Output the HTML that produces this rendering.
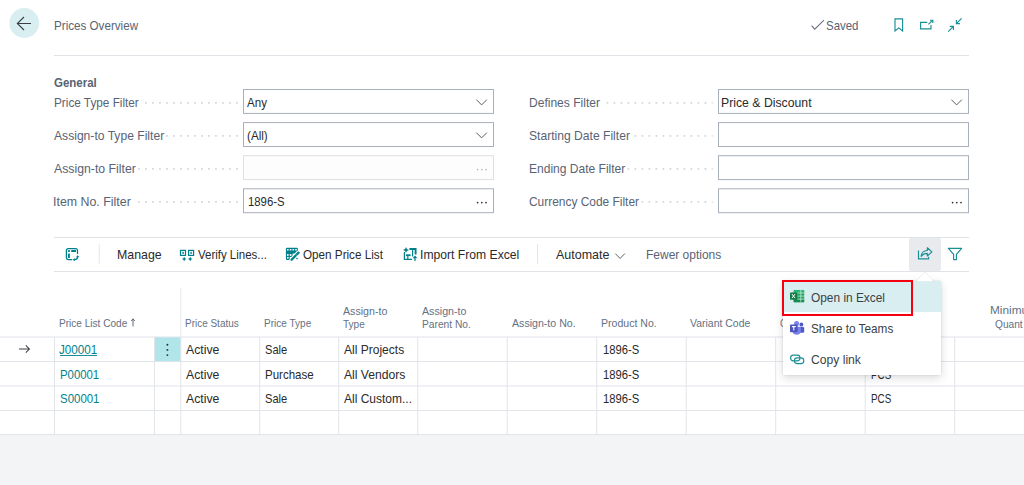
<!DOCTYPE html>
<html><head><meta charset="utf-8"><title>Prices Overview</title>
<style>
html,body{margin:0;padding:0}
body{width:1024px;height:485px;overflow:hidden;position:relative;background:#fff;font-family:"Liberation Sans",sans-serif}
.t{position:absolute;white-space:nowrap;line-height:16px;transform-origin:0 50%;display:block}
.a{position:absolute}
.hl{position:absolute;height:1px;background:#dfe2e7}
.vl{position:absolute;width:1px;background:#e1e3e6}
.box{position:absolute;box-sizing:border-box;border:1px solid #a9b0ba;background:#fff;height:25px}
.box.dis{border-color:#dcdfe3;background:#fdfdfd}
.dots{position:absolute;height:2px;background-image:radial-gradient(circle at 6px 1px,#c6cad0 0.7px,transparent 1.15px);background-size:7px 2px;background-repeat:repeat-x;background-position:right top}
svg{position:absolute;overflow:visible}
</style></head><body>
<!-- bottom gray -->
<div class="a" style="left:0;top:435px;width:1024px;height:50px;background:#f3f4f6"></div>

<!-- back button -->
<svg style="left:0;top:0" width="64" height="48" viewBox="0 0 64 48" fill="none"><circle cx="24.25" cy="23" r="14.9" fill="#d8eef1"/><path d="M24 17 L17.3 23.5 L24 30 M17.3 23.5 H31" stroke="#3b3f45" stroke-width="1.1"/></svg>

<!-- title line -->
<div class="hl" style="left:54px;top:55px;width:915px"></div>

<!-- form boxes -->
<svg style="left:0;top:0" width="1024" height="485" viewBox="0 0 1024 485" fill="#fff" stroke="#a9b0ba" stroke-width="1">
<rect x="243.5" y="89.50" width="250" height="23.9"/>
<rect x="243.5" y="122.60" width="250" height="23.9"/>
<rect x="243.5" y="155.70" width="250" height="23.9" stroke="#dcdfe4" fill="#fdfdfd"/>
<rect x="243.5" y="188.80" width="250" height="23.9"/>
<rect x="718.5" y="89.50" width="250" height="23.9"/>
<rect x="718.5" y="122.60" width="250" height="23.9"/>
<rect x="718.5" y="155.70" width="250" height="23.9"/>
<rect x="718.5" y="188.80" width="250" height="23.9"/>
</svg>
<svg style="left:0;top:0" width="1024" height="485" viewBox="0 0 1024 485" fill="#d2d5da"><rect x="236.09" y="102.05" width="1.7" height="1.7"/><rect x="229.09" y="102.05" width="1.7" height="1.7"/><rect x="222.09" y="102.05" width="1.7" height="1.7"/><rect x="215.09" y="102.05" width="1.7" height="1.7"/><rect x="208.09" y="102.05" width="1.7" height="1.7"/><rect x="201.09" y="102.05" width="1.7" height="1.7"/><rect x="194.09" y="102.05" width="1.7" height="1.7"/><rect x="187.09" y="102.05" width="1.7" height="1.7"/><rect x="180.09" y="102.05" width="1.7" height="1.7"/><rect x="173.09" y="102.05" width="1.7" height="1.7"/><rect x="166.09" y="102.05" width="1.7" height="1.7"/><rect x="159.09" y="102.05" width="1.7" height="1.7"/><rect x="152.09" y="102.05" width="1.7" height="1.7"/><rect x="145.09" y="102.05" width="1.7" height="1.7"/><rect x="236.09" y="135.05" width="1.7" height="1.7"/><rect x="229.09" y="135.05" width="1.7" height="1.7"/><rect x="222.09" y="135.05" width="1.7" height="1.7"/><rect x="215.09" y="135.05" width="1.7" height="1.7"/><rect x="208.09" y="135.05" width="1.7" height="1.7"/><rect x="201.09" y="135.05" width="1.7" height="1.7"/><rect x="194.09" y="135.05" width="1.7" height="1.7"/><rect x="187.09" y="135.05" width="1.7" height="1.7"/><rect x="180.09" y="135.05" width="1.7" height="1.7"/><rect x="173.09" y="135.05" width="1.7" height="1.7"/><rect x="166.09" y="135.05" width="1.7" height="1.7"/><rect x="236.09" y="168.05" width="1.7" height="1.7"/><rect x="229.09" y="168.05" width="1.7" height="1.7"/><rect x="222.09" y="168.05" width="1.7" height="1.7"/><rect x="215.09" y="168.05" width="1.7" height="1.7"/><rect x="208.09" y="168.05" width="1.7" height="1.7"/><rect x="201.09" y="168.05" width="1.7" height="1.7"/><rect x="194.09" y="168.05" width="1.7" height="1.7"/><rect x="187.09" y="168.05" width="1.7" height="1.7"/><rect x="180.09" y="168.05" width="1.7" height="1.7"/><rect x="173.09" y="168.05" width="1.7" height="1.7"/><rect x="166.09" y="168.05" width="1.7" height="1.7"/><rect x="159.09" y="168.05" width="1.7" height="1.7"/><rect x="152.09" y="168.05" width="1.7" height="1.7"/><rect x="145.09" y="168.05" width="1.7" height="1.7"/><rect x="138.09" y="168.05" width="1.7" height="1.7"/><rect x="236.09" y="201.05" width="1.7" height="1.7"/><rect x="229.09" y="201.05" width="1.7" height="1.7"/><rect x="222.09" y="201.05" width="1.7" height="1.7"/><rect x="215.09" y="201.05" width="1.7" height="1.7"/><rect x="208.09" y="201.05" width="1.7" height="1.7"/><rect x="201.09" y="201.05" width="1.7" height="1.7"/><rect x="194.09" y="201.05" width="1.7" height="1.7"/><rect x="187.09" y="201.05" width="1.7" height="1.7"/><rect x="180.09" y="201.05" width="1.7" height="1.7"/><rect x="173.09" y="201.05" width="1.7" height="1.7"/><rect x="166.09" y="201.05" width="1.7" height="1.7"/><rect x="159.09" y="201.05" width="1.7" height="1.7"/><rect x="152.09" y="201.05" width="1.7" height="1.7"/><rect x="145.09" y="201.05" width="1.7" height="1.7"/><rect x="138.09" y="201.05" width="1.7" height="1.7"/><rect x="704.55" y="102.05" width="1.7" height="1.7"/><rect x="697.55" y="102.05" width="1.7" height="1.7"/><rect x="690.55" y="102.05" width="1.7" height="1.7"/><rect x="683.55" y="102.05" width="1.7" height="1.7"/><rect x="676.55" y="102.05" width="1.7" height="1.7"/><rect x="669.55" y="102.05" width="1.7" height="1.7"/><rect x="662.55" y="102.05" width="1.7" height="1.7"/><rect x="655.55" y="102.05" width="1.7" height="1.7"/><rect x="648.55" y="102.05" width="1.7" height="1.7"/><rect x="641.55" y="102.05" width="1.7" height="1.7"/><rect x="634.55" y="102.05" width="1.7" height="1.7"/><rect x="627.55" y="102.05" width="1.7" height="1.7"/><rect x="620.55" y="102.05" width="1.7" height="1.7"/><rect x="613.55" y="102.05" width="1.7" height="1.7"/><rect x="606.55" y="102.05" width="1.7" height="1.7"/><rect x="704.55" y="135.05" width="1.7" height="1.7"/><rect x="697.55" y="135.05" width="1.7" height="1.7"/><rect x="690.55" y="135.05" width="1.7" height="1.7"/><rect x="683.55" y="135.05" width="1.7" height="1.7"/><rect x="676.55" y="135.05" width="1.7" height="1.7"/><rect x="669.55" y="135.05" width="1.7" height="1.7"/><rect x="662.55" y="135.05" width="1.7" height="1.7"/><rect x="655.55" y="135.05" width="1.7" height="1.7"/><rect x="648.55" y="135.05" width="1.7" height="1.7"/><rect x="641.55" y="135.05" width="1.7" height="1.7"/><rect x="634.55" y="135.05" width="1.7" height="1.7"/><rect x="704.55" y="168.05" width="1.7" height="1.7"/><rect x="697.55" y="168.05" width="1.7" height="1.7"/><rect x="690.55" y="168.05" width="1.7" height="1.7"/><rect x="683.55" y="168.05" width="1.7" height="1.7"/><rect x="676.55" y="168.05" width="1.7" height="1.7"/><rect x="669.55" y="168.05" width="1.7" height="1.7"/><rect x="662.55" y="168.05" width="1.7" height="1.7"/><rect x="655.55" y="168.05" width="1.7" height="1.7"/><rect x="648.55" y="168.05" width="1.7" height="1.7"/><rect x="641.55" y="168.05" width="1.7" height="1.7"/><rect x="634.55" y="168.05" width="1.7" height="1.7"/><rect x="627.55" y="168.05" width="1.7" height="1.7"/><rect x="704.55" y="201.05" width="1.7" height="1.7"/><rect x="697.55" y="201.05" width="1.7" height="1.7"/><rect x="690.55" y="201.05" width="1.7" height="1.7"/><rect x="683.55" y="201.05" width="1.7" height="1.7"/><rect x="676.55" y="201.05" width="1.7" height="1.7"/><rect x="669.55" y="201.05" width="1.7" height="1.7"/><rect x="662.55" y="201.05" width="1.7" height="1.7"/><rect x="655.55" y="201.05" width="1.7" height="1.7"/><rect x="648.55" y="201.05" width="1.7" height="1.7"/><rect x="641.55" y="201.05" width="1.7" height="1.7"/><g fill="#e6e8eb"><rect x="711.55" y="102.05" width="1.7" height="1.7"/><rect x="711.55" y="135.05" width="1.7" height="1.7"/><rect x="711.55" y="168.05" width="1.7" height="1.7"/><rect x="711.55" y="201.05" width="1.7" height="1.7"/></g></svg>

<!-- toolbar -->
<div class="hl" style="left:54px;top:237px;width:915px"></div>
<div class="hl" style="left:54px;top:271px;width:915px"></div>
<svg style="left:0;top:0" width="1024" height="485" viewBox="0 0 1024 485" fill="#e1e4e9"><rect x="98.7" y="244.3" width="1" height="19.4"/><rect x="537.1" y="244.3" width="1" height="19.4"/></svg>
<div class="a" style="left:909.3px;top:238px;width:31.7px;height:33px;background:#e9eaed;border-radius:2px"></div>

<!-- table grid -->
<div class="a" style="left:155px;top:337px;width:26px;height:24px;background:#b0e6ea"></div>
<svg style="left:0;top:0" width="1024" height="485" viewBox="0 0 1024 485" fill="#e1e4e9">
<rect x="0" y="336.5" width="1024" height="1"/><rect x="0" y="361" width="1024" height="1"/><rect x="0" y="385.5" width="1024" height="1"/><rect x="0" y="410" width="1024" height="1"/><rect x="0" y="434" width="1024" height="1"/>
<rect x="54" y="337" width="1" height="97"/><rect x="154" y="337" width="1" height="97"/><rect x="259.2" y="337" width="1" height="97"/><rect x="338.2" y="337" width="1" height="97"/><rect x="417.2" y="337" width="1" height="97"/><rect x="506.7" y="337" width="1" height="97"/><rect x="596.2" y="337" width="1" height="97"/><rect x="685.7" y="337" width="1" height="97"/><rect x="775.2" y="337" width="1" height="97"/><rect x="864.7" y="337" width="1" height="97"/><rect x="954.2" y="337" width="1" height="97"/><rect x="180.3" y="337" width="1" height="97"/><rect x="180.3" y="288" width="1" height="49" fill="#e6e8eb"/>
</svg>

<!-- ICONS -->
<svg style="left:0;top:0" width="1024" height="485" viewBox="0 0 1024 485" fill="none">
<g stroke="#6a7280" stroke-width="1.05">
 <path d="M811.6 25.6 L814.7 29.2 L824 20.1"/>
</g>
<g stroke="#1a8f96" stroke-width="1.15">
 <!-- bookmark -->
 <path d="M895 18.8 H902.6 V31 L898.8 27.9 L895 31 Z"/>
 <!-- popout -->
 <path d="M927.3 22.3 H920.6 V28.9 H931 V25"/>
 <path d="M928.4 24.3 L932.4 20.5"/>
 <path d="M930 20.2 H932.8 V23" />
 <!-- collapse -->
 <path d="M961.6 18.4 L956.4 23.6 M956.4 20 V23.6 H960"/>
 <path d="M948.2 31.6 L953.4 26.4 M949.8 26.4 H953.4 V30"/>
</g>
<!-- dropdown chevrons -->
<g stroke="#555b64" stroke-width="1">
 <path d="M476.4 99.7 L481.6 104.9 L486.8 99.7"/>
 <path d="M476.4 132.7 L481.6 137.9 L486.8 132.7"/>
 <path d="M951.4 99.7 L956.6 104.9 L961.8 99.7"/>
 <path d="M615.3 253.6 L620.1 258.4 L624.9 253.6" stroke="#5a6270"/>
</g>
<!-- ellipsis -->
<g fill="#2a2d33">
 <circle cx="477.6" cy="202.6" r=".85"/><circle cx="481.8" cy="202.6" r=".85"/><circle cx="486" cy="202.6" r=".85"/>
 <circle cx="952.6" cy="202.6" r=".85"/><circle cx="956.8" cy="202.6" r=".85"/><circle cx="961" cy="202.6" r=".85"/>
</g>
<g fill="#b7bcc3">
 <circle cx="477.6" cy="169.6" r=".85"/><circle cx="481.8" cy="169.6" r=".85"/><circle cx="486" cy="169.6" r=".85"/>
</g>
<!-- row arrow -->
<path d="M19 349 H29.4 M25.8 345.4 L29.4 349 L25.8 352.6" stroke="#3b3f45" stroke-width="1.05"/>
<!-- vertical 3 dots -->
<g fill="#2a2d33"><circle cx="167.4" cy="344.7" r=".95"/><circle cx="167.4" cy="349.9" r=".95"/><circle cx="167.4" cy="355.1" r=".95"/></g>
<!-- sort arrow -->
<path d="M133 326.4 V318.8 M131.2 321 L133 318.8 L134.8 321" stroke="#5c6b7e" stroke-width="1"/>

<!-- toolbar icon 1 -->
<g stroke="#00808a" stroke-width="1.25" stroke-linecap="round">
 <path d="M77.5 253.6 V250.4 Q77.5 248.5 75.6 248.5 H68.3 Q66.4 248.5 66.4 250.4 V257.6 Q66.4 259.5 68.3 259.5 H71.8"/>
 <path d="M77.6 257 Q77.6 259.6 74.4 259.6"/>
</g>
<g fill="#00808a">
 <rect x="68" y="250.1" width="1.9" height="1.9" rx=".4"/>
 <rect x="71.2" y="250.1" width="4.9" height="1.9" rx=".6"/>
 <rect x="68" y="253.6" width="1.9" height="4.5" rx=".6"/>
 <path d="M76 257.2 L77.7 255.2 L79.4 257.2 Z"/>
 <path d="M74.8 258 L72.8 259.7 L74.8 261.2 Z"/>
</g>
<!-- verify lines icon -->
<g stroke="#00808a" stroke-width="1.2">
 <rect x="180.5" y="250.4" width="5" height="5"/>
 <rect x="188.6" y="250.4" width="5" height="5"/>
</g>
<g fill="#3a9fa6">
 <rect x="182.2" y="251.8" width="1.8" height="2.2"/>
 <rect x="190.3" y="251.8" width="1.8" height="2.2"/>
</g>
<g fill="#00808a">
 <path d="M184.2 256.8 L185 258.2 L186.4 259 L185 259.8 L184.2 261.2 L183.4 259.8 L182 259 L183.4 258.2 Z"/>
 <path d="M190.2 256.8 L191 258.2 L192.4 259 L191 259.8 L190.2 261.2 L189.4 259.8 L188 259 L189.4 258.2 Z"/>
</g>
<!-- open price list icon -->
<rect x="285.9" y="247.8" width="12" height="12.1" rx="1.2" fill="#00808a"/>
<g fill="#fff">
 <rect x="287" y="249" width="1.6" height="1.5"/><rect x="289.8" y="249" width="1.6" height="1.5"/><rect x="292.5" y="249" width="1.6" height="1.5"/><rect x="295.2" y="249" width="1.6" height="1.5"/>
 <rect x="287" y="254.1" width="1.6" height="1.8"/><rect x="289.8" y="254.1" width="1.6" height="1.8"/>
 <rect x="287" y="257" width="1.6" height="1.6"/><rect x="289.8" y="257" width="1.6" height="1.6"/>
 <path d="M292.6 253.6 H298 V260 H292.6 Z"/>
</g>
<path d="M299 252 L290.6 260.6" stroke="#fff" stroke-width="4.2"/>
<path d="M298.6 252.6 L291.6 259.8" stroke="#00808a" stroke-width="2.3" stroke-linecap="round"/>
<path d="M296.3 254.6 L297.2 255.5" stroke="#fff" stroke-width=".7"/>
<circle cx="297" cy="258.6" r=".8" fill="#00808a"/>
<!-- import from excel icon -->
<g stroke="#00808a" stroke-width="1.2">
 <path d="M404.4 252 V259.4 H412"/>
 <path d="M406 255.2 H410.6" stroke-width="1.8"/>
 <path d="M407.8 255.2 V259.4"/>
 <path d="M412.6 250 V256.6"/>
 <path d="M409.4 249 H415.6 V254.5" stroke-width="1.9"/>
 <path d="M415 261 V257"/>
</g>
<g fill="#00808a">
 <path d="M406 247 L406.9 249.1 L409 250 L406.9 250.9 L406 253 L405.1 250.9 L403 250 L405.1 249.1 Z"/>
 <path d="M412.6 258.2 L415 255.4 L417.4 258.2 Z"/>
</g>
<!-- share icon -->
<g stroke="#1a8f96" stroke-width="1.15">
 <path d="M918.5 250.4 V258.8 H928.6 V256.8"/>
 <path d="M921.2 256.4 Q921.6 250.8 927.3 250.5 V247.8 L931.9 251.9 L927.3 256 V253.4 Q923.4 253.4 921.2 256.4 Z" stroke-linejoin="round"/>
</g>
<!-- filter icon -->
<path d="M948.4 248.3 H961.6 L956.4 254.4 V259.6 H953.6 V254.4 Z" stroke="#1a8f96" stroke-width="1.15" stroke-linejoin="round"/>
</svg>

<div class="a" style="left:59.8px;top:355px;width:37.2px;height:1px;background:#1a8f96"></div>
<span class="t" style="left:53.54px;top:18.08px;font-size:12.6px;color:#586374;transform:scaleX(0.9242)">Prices Overview</span>
<span class="t" style="left:825.79px;top:18.08px;font-size:12.6px;color:#586374;transform:scaleX(0.9098)">Saved</span>
<span class="t" style="left:53.73px;top:74.68px;font-size:12.6px;color:#586374;font-weight:700;transform:scaleX(0.9115)">General</span>
<span class="t" style="left:53.75px;top:94.98px;font-size:12.6px;color:#586374;transform:scaleX(0.9343)">Price Type Filter</span>
<span class="t" style="left:54.01px;top:127.98px;font-size:12.6px;color:#586374;transform:scaleX(0.9619)">Assign-to Type Filter</span>
<span class="t" style="left:53.87px;top:160.98px;font-size:12.6px;color:#586374;transform:scaleX(0.9748)">Assign-to Filter</span>
<span class="t" style="left:53.01px;top:193.98px;font-size:12.6px;color:#586374;transform:scaleX(0.9837)">Item No. Filter</span>
<span class="t" style="left:529.27px;top:94.98px;font-size:12.6px;color:#586374;transform:scaleX(0.9566)">Defines Filter</span>
<span class="t" style="left:528.89px;top:127.98px;font-size:12.6px;color:#586374;transform:scaleX(0.9615)">Starting Date Filter</span>
<span class="t" style="left:529.37px;top:160.98px;font-size:12.6px;color:#586374;transform:scaleX(0.9553)">Ending Date Filter</span>
<span class="t" style="left:528.52px;top:193.98px;font-size:12.6px;color:#586374;transform:scaleX(0.9470)">Currency Code Filter</span>
<span class="t" style="left:246.57px;top:95.28px;font-size:12.6px;color:#2a2a2a;transform:scaleX(0.9175)">Any</span>
<span class="t" style="left:246.98px;top:128.28px;font-size:12.6px;color:#2a2a2a;transform:scaleX(0.9265)">(All)</span>
<span class="t" style="left:247.78px;top:194.28px;font-size:12.6px;color:#2a2a2a;transform:scaleX(0.9006)">1896-S</span>
<span class="t" style="left:721.33px;top:95.28px;font-size:12.6px;color:#2a2a2a;transform:scaleX(0.9728)">Price &amp; Discount</span>
<span class="t" style="left:117.42px;top:247.18px;font-size:12.6px;color:#2a2a2a;transform:scaleX(0.9803)">Manage</span>
<span class="t" style="left:198.13px;top:247.18px;font-size:12.6px;color:#2a2a2a;transform:scaleX(0.9106)">Verify Lines...</span>
<span class="t" style="left:303.25px;top:247.18px;font-size:12.6px;color:#2a2a2a;transform:scaleX(0.9280)">Open Price List</span>
<span class="t" style="left:419.73px;top:247.18px;font-size:12.6px;color:#2a2a2a;transform:scaleX(0.9652)">Import From Excel</span>
<span class="t" style="left:555.53px;top:247.18px;font-size:12.6px;color:#2a2a2a;transform:scaleX(0.9921)">Automate</span>
<span class="t" style="left:645.78px;top:247.18px;font-size:12.6px;color:#586374;transform:scaleX(0.9512)">Fewer options</span>
<span class="t" style="left:58.76px;top:314.98px;font-size:10.6px;color:#647184;transform:scaleX(0.9503)">Price List Code</span>
<span class="t" style="left:185.02px;top:314.98px;font-size:10.6px;color:#647184;transform:scaleX(0.9404)">Price Status</span>
<span class="t" style="left:264.17px;top:314.98px;font-size:10.6px;color:#647184;transform:scaleX(0.9473)">Price Type</span>
<span class="t" style="left:343.22px;top:302.68px;font-size:10.6px;color:#647184;transform:scaleX(1.0029)">Assign-to</span>
<span class="t" style="left:343.39px;top:316.28px;font-size:10.6px;color:#647184;transform:scaleX(0.9470)">Type</span>
<span class="t" style="left:422.41px;top:302.68px;font-size:10.6px;color:#647184;transform:scaleX(1.0056)">Assign-to</span>
<span class="t" style="left:422.09px;top:316.28px;font-size:10.6px;color:#647184;transform:scaleX(0.9654)">Parent No.</span>
<span class="t" style="left:511.78px;top:314.98px;font-size:10.6px;color:#647184;transform:scaleX(1.0011)">Assign-to No.</span>
<span class="t" style="left:601.28px;top:314.98px;font-size:10.6px;color:#647184;transform:scaleX(0.9966)">Product No.</span>
<span class="t" style="left:690.25px;top:314.98px;font-size:10.6px;color:#647184;transform:scaleX(0.9879)">Variant Code</span>
<span class="t" style="left:780.26px;top:314.98px;font-size:10.6px;color:#647184;transform:scaleX(0.8439)">C</span>
<span class="t" style="left:989.68px;top:302.38px;font-size:10.6px;color:#647184;transform:scaleX(1.1150)">Minimu</span>
<span class="t" style="left:994.84px;top:316.28px;font-size:10.6px;color:#647184;transform:scaleX(0.9591)">Quant</span>
<span class="t" style="left:59.34px;top:342.28px;font-size:12.6px;color:#00838a;transform:scaleX(0.9255)">J00001</span>
<span class="t" style="left:60.26px;top:366.78px;font-size:12.6px;color:#00838a;transform:scaleX(0.9019)">P00001</span>
<span class="t" style="left:59.82px;top:391.28px;font-size:12.6px;color:#00838a;transform:scaleX(0.9095)">S00001</span>
<span class="t" style="left:186.18px;top:342.28px;font-size:12.6px;color:#2a2a2a;transform:scaleX(0.9740)">Active</span>
<span class="t" style="left:602.68px;top:342.28px;font-size:12.6px;color:#2a2a2a;transform:scaleX(0.8939)">1896-S</span>
<span class="t" style="left:186.18px;top:366.78px;font-size:12.6px;color:#2a2a2a;transform:scaleX(0.9740)">Active</span>
<span class="t" style="left:602.68px;top:366.78px;font-size:12.6px;color:#2a2a2a;transform:scaleX(0.8939)">1896-S</span>
<span class="t" style="left:186.18px;top:391.28px;font-size:12.6px;color:#2a2a2a;transform:scaleX(0.9740)">Active</span>
<span class="t" style="left:602.68px;top:391.28px;font-size:12.6px;color:#2a2a2a;transform:scaleX(0.8939)">1896-S</span>
<span class="t" style="left:264.74px;top:342.28px;font-size:12.6px;color:#2a2a2a;transform:scaleX(0.8829)">Sale</span>
<span class="t" style="left:265.04px;top:366.78px;font-size:12.6px;color:#2a2a2a;transform:scaleX(0.9152)">Purchase</span>
<span class="t" style="left:264.74px;top:391.28px;font-size:12.6px;color:#2a2a2a;transform:scaleX(0.8829)">Sale</span>
<span class="t" style="left:344.44px;top:342.28px;font-size:12.6px;color:#2a2a2a;transform:scaleX(0.9548)">All Projects</span>
<span class="t" style="left:343.98px;top:366.78px;font-size:12.6px;color:#2a2a2a;transform:scaleX(0.9645)">All Vendors</span>
<span class="t" style="left:344.10px;top:391.28px;font-size:12.6px;color:#2a2a2a;transform:scaleX(0.9523)">All Custom...</span>
<span class="t" style="left:870.80px;top:366.78px;font-size:12.6px;color:#2a2a2a;transform:scaleX(0.7827)">PCS</span>
<span class="t" style="left:870.80px;top:391.28px;font-size:12.6px;color:#2a2a2a;transform:scaleX(0.7827)">PCS</span>

<!-- menu -->
<div class="a" style="left:783px;top:280.5px;width:158px;height:94px;background:#fff;box-shadow:0 3px 9px rgba(0,0,0,.14),0 0 2px rgba(0,0,0,.12)"></div>
<div class="a" style="left:783px;top:280.5px;width:158px;height:31.3px;background:#d9eef1"></div>
<div class="a" style="left:782px;top:280px;width:131px;height:36px;box-sizing:border-box;border:2px solid #f5000f"></div>

<svg style="left:0;top:0" width="1024" height="485" viewBox="0 0 1024 485" fill="none">
<!-- caret -->
<path d="M916.3 280.8 L925 272 L933.7 280.8 Z" fill="#fff" stroke="rgba(0,0,0,.07)" stroke-width="1"/><path d="M916.8 281.2 L925 272.9 L933.2 281.2 Z" fill="#fff"/>
<!-- excel -->
<rect x="793.6" y="289.9" width="10.6" height="12.4" rx="1" fill="#21a366"/>
<rect x="793.6" y="289.9" width="10.6" height="3.1" fill="#33c481" opacity=".55"/>
<rect x="793.6" y="299.2" width="10.6" height="3.1" fill="#107c41" opacity=".6"/>
<g stroke="#e9f7ef" stroke-width=".7" opacity=".9"><path d="M797.5 293 H804.2 M797.5 296.1 H804.2 M797.5 299.2 H804.2 M800.8 290 V302.2"/></g>
<rect x="790" y="292.4" width="7" height="7.4" rx=".8" fill="#107c41"/>
<path d="M791.9 294 L795.1 298.2 M795.1 294 L791.9 298.2" stroke="#fff" stroke-width="1"/>
<!-- teams -->
<circle cx="801.4" cy="324.4" r="1.9" fill="#5059c9"/>
<rect x="798.6" y="326.8" width="5.6" height="6" rx="1.6" fill="#5059c9"/>
<circle cx="796.6" cy="323.6" r="2.5" fill="#7b83eb"/>
<path d="M792.6 326.8 H800.8 V331 Q800.8 334.8 796.7 334.8 Q792.6 334.8 792.6 331 Z" fill="#7b83eb"/>
<rect x="790" y="324.6" width="7.6" height="7.6" rx=".9" fill="#4b53bc"/>
<path d="M791.9 326.6 H795.7 M793.8 326.6 V330.6" stroke="#fff" stroke-width="1.05"/>
<!-- link -->
<g stroke="#1a8f96" stroke-width="1.15">
 <rect x="790.6" y="355.1" width="9.4" height="5.8" rx="2.9"/>
 <rect x="794.4" y="357.8" width="9.4" height="5.8" rx="2.9"/>
</g>
</svg>

<span class="t" style="left:810.90px;top:289.58px;font-size:12.9px;color:#3b3f45;transform:scaleX(0.9221)">Open in Excel</span>
<span class="t" style="left:810.86px;top:320.98px;font-size:12.9px;color:#3b3f45;transform:scaleX(0.9139)">Share to Teams</span>
<span class="t" style="left:810.85px;top:352.38px;font-size:12.9px;color:#3b3f45;transform:scaleX(0.9411)">Copy link</span>
</body></html>
